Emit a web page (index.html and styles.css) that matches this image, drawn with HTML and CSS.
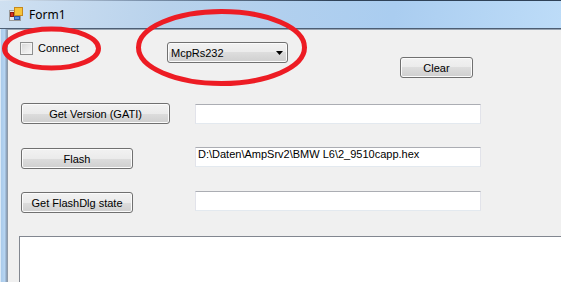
FILE: index.html
```html
<!DOCTYPE html>
<html>
<head>
<meta charset="utf-8">
<title>Form1</title>
<link rel="stylesheet" href="styles.css">
</head>
<body>
<div class="window">
  <div class="titlebar">
    <svg class="app-icon" width="14" height="14" viewBox="0 0 14 14">
      <rect x="0.5" y="3.5" width="11" height="10" fill="#e6e6e6" stroke="#9a9a9a"/>
      <rect x="1.5" y="5.5" width="3" height="4" fill="#d8321f" stroke="#8e1c12"/>
      <rect x="5.5" y="0.5" width="8" height="8" fill="#f6c43a" stroke="#c6871c"/>
      <rect x="5.5" y="9.5" width="5" height="3" fill="#5a8ee0" stroke="#2c58a6"/>
    </svg>
    <span class="title">Form1</span>
  </div>
  <div class="main">
    <div class="frame-left"></div>
    <div class="client">
      <div class="row-top">
        <label class="connect"><span class="checkbox"></span><span class="connect-text">Connect</span></label>
        <div class="combo"><span>McpRs232</span><svg width="7" height="4" viewBox="0 0 7 4"><polygon points="0,0 7,0 3.5,4" fill="#000"/></svg></div>
        <div class="btn btn-clear">Clear</div>
      </div>
      <div class="row row-1">
        <div class="btn btn-wide">Get Version (GATI)</div>
        <div class="textbox tb-wide tb-down"></div>
      </div>
      <div class="row row-2">
        <div class="btn btn-narrow btn-down">Flash</div>
        <div class="textbox tb-narrow">D:\Daten\AmpSrv2\BMW L6\2_9510capp.hex</div>
      </div>
      <div class="row row-3">
        <div class="btn btn-narrow btn-down">Get FlashDlg state</div>
        <div class="textbox tb-narrow"></div>
      </div>
      <div class="logbox"></div>
    </div>
  </div>
  <svg class="marks" width="561" height="282" viewBox="0 0 561 282">
    <ellipse cx="51.5" cy="48.5" rx="47" ry="19.5" fill="none" stroke="#ed1c24" stroke-width="5"/>
    <ellipse cx="221.5" cy="47.5" rx="83" ry="36" fill="none" stroke="#ed1c24" stroke-width="5"/>
  </svg>
</div>
</body>
</html>
```
FILE: styles.css
```css
html, body {
  margin: 0;
  padding: 0;
  background: #f0f0f0;
}

.window {
  position: relative;
  width: 561px;
  height: 282px;
  overflow: hidden;
  font-family: "Liberation Sans", Arial, sans-serif;
  font-size: 11px;
  color: #000;
}

.titlebar {
  height: 28px;
  display: flex;
  align-items: center;
  background:
    linear-gradient(to right, #dce8f4 0%, #7d93ad 25%, #2f4258 60%) top / 100% 1px no-repeat,
    linear-gradient(100deg, #cfe0f1 0%, #b8d2ec 30%, #aacdf0 70%, #bddcf8 100%);
  border-bottom: 1px solid #4d5e73;
}

.app-icon {
  margin-left: 9px;
  flex: none;
}

.title {
  margin-left: 6px;
  font-family: "Noto Sans", "Open Sans", sans-serif;
  font-size: 12px;
  color: #000;
}

.main {
  display: flex;
  height: 253px;
}

.frame-left {
  width: 7px;
  flex: none;
  background: linear-gradient(to right, #dbe9f6 0px, #dbe9f6 1px, #a9caea 1px, #b7d5f2 5px, #8ea4bd 6px, #8ea4bd 7px);
}

.client {
  flex: 1;
  min-width: 0;
  background: #f0f0f0;
  border-top: 1px solid #99a4b1;
  border-left: 1px solid #8f9aa7;
}

.row-top {
  display: flex;
  align-items: flex-start;
  padding-top: 12px;
  padding-left: 12px;
}

.connect {
  width: 147px;
  flex: none;
  height: 13px;
  display: flex;
  align-items: center;
}

.checkbox {
  width: 13px;
  height: 13px;
  box-sizing: border-box;
  border: 1px solid #8e8f8f;
  background: linear-gradient(135deg, #d6d6d6 0%, #ececec 60%, #f9f9f9 100%);
  box-shadow: inset 0 0 0 1px #f4f4f4;
  flex: none;
}

.connect-text {
  margin-left: 5px;
  line-height: 13px;
}

.combo {
  width: 121px;
  height: 21px;
  box-sizing: border-box;
  flex: none;
  border: 1px solid #707070;
  border-radius: 3px;
  background: linear-gradient(#f2f2f2 0%, #ebebeb 50%, #dddddd 50%, #cfcfcf 100%);
  box-shadow: inset 0 0 0 1px #fbfbfb;
  display: flex;
  align-items: center;
  justify-content: space-between;
  padding: 0 4px 0 3px;
}

.btn {
  height: 21px;
  box-sizing: border-box;
  flex: none;
  border: 1px solid #707070;
  border-radius: 3px;
  background: linear-gradient(#f2f2f2 0%, #ebebeb 50%, #dddddd 50%, #cfcfcf 100%);
  box-shadow: inset 0 0 0 1px #fbfbfb;
  display: flex;
  align-items: center;
  justify-content: center;
  white-space: nowrap;
}

.btn-clear {
  width: 73px;
  margin-left: 112px;
  margin-top: 15px;
}

.btn-wide {
  width: 149px;
}

.btn-narrow {
  width: 112px;
}

.btn-down {
  margin-top: 1px;
}

.row {
  display: flex;
  align-items: flex-start;
  padding-left: 13px;
}

.row-1 {
  margin-top: 25px;
}

.row-2 {
  margin-top: 23px;
}

.row-3 {
  margin-top: 22px;
}

.textbox {
  width: 286px;
  height: 20px;
  box-sizing: border-box;
  flex: none;
  background: #fff;
  border: 1px solid #e2e3ea;
  border-top-color: #abadb3;
  border-bottom-color: #e3e9ef;
  padding: 0 2px;
  line-height: 13px;
  white-space: nowrap;
  overflow: hidden;
}

.tb-wide {
  margin-left: 25px;
}

.tb-narrow {
  margin-left: 62px;
}

.tb-down {
  margin-top: 1px;
}

.logbox {
  margin-top: 23px;
  margin-left: 11px;
  width: 600px;
  height: 80px;
  background: #fff;
  border: 1px solid #828790;
}

.marks {
  position: absolute;
  left: 0;
  top: 0;
  pointer-events: none;
}
```
